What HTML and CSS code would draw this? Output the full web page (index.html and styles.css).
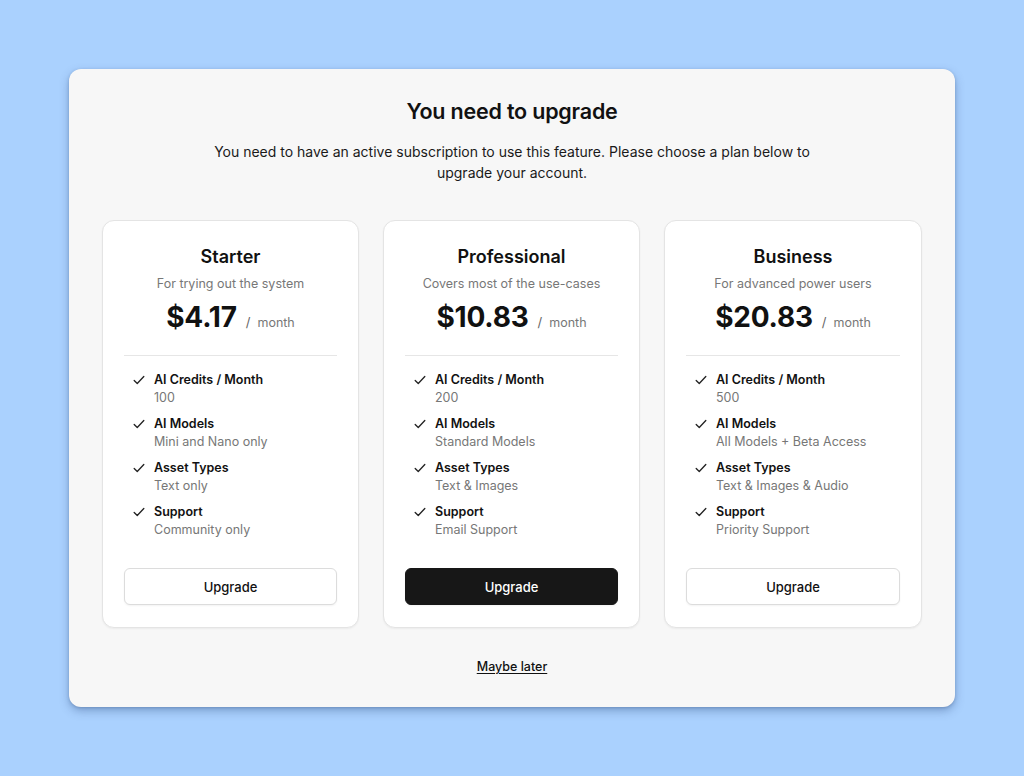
FILE: index.html
```html
<!DOCTYPE html>
<html>
<head>
<meta charset="utf-8">
<link rel="stylesheet" href="styles.css">
</head>
<body>
<div class="page">
  <div class="modal">
    <h1 class="title">You need to upgrade</h1>
    <p class="subtitle">You need to have an active subscription to use this feature. Please choose a plan below to upgrade your account.</p>
    <div class="plans">
      <div class="card">
        <div class="plan-name">Starter</div>
        <div class="plan-desc">For trying out the system</div>
        <div class="price"><span class="amount">$4.17</span><span class="slash">/</span><span class="per">month</span></div>
        <div class="divider"></div>
        <ul class="features">
          <li><svg class="check" viewBox="0 0 16 16"><path d="M2.5 8.5l3.5 3.5 7.5-8"/></svg><div><div class="f-label">AI Credits / Month</div><div class="f-value">100</div></div></li>
          <li><svg class="check" viewBox="0 0 16 16"><path d="M2.5 8.5l3.5 3.5 7.5-8"/></svg><div><div class="f-label">AI Models</div><div class="f-value">Mini and Nano only</div></div></li>
          <li><svg class="check" viewBox="0 0 16 16"><path d="M2.5 8.5l3.5 3.5 7.5-8"/></svg><div><div class="f-label">Asset Types</div><div class="f-value">Text only</div></div></li>
          <li><svg class="check" viewBox="0 0 16 16"><path d="M2.5 8.5l3.5 3.5 7.5-8"/></svg><div><div class="f-label">Support</div><div class="f-value">Community only</div></div></li>
        </ul>
        <button class="btn">Upgrade</button>
      </div>
      <div class="card">
        <div class="plan-name">Professional</div>
        <div class="plan-desc">Covers most of the use-cases</div>
        <div class="price"><span class="amount">$10.83</span><span class="slash">/</span><span class="per">month</span></div>
        <div class="divider"></div>
        <ul class="features">
          <li><svg class="check" viewBox="0 0 16 16"><path d="M2.5 8.5l3.5 3.5 7.5-8"/></svg><div><div class="f-label">AI Credits / Month</div><div class="f-value">200</div></div></li>
          <li><svg class="check" viewBox="0 0 16 16"><path d="M2.5 8.5l3.5 3.5 7.5-8"/></svg><div><div class="f-label">AI Models</div><div class="f-value">Standard Models</div></div></li>
          <li><svg class="check" viewBox="0 0 16 16"><path d="M2.5 8.5l3.5 3.5 7.5-8"/></svg><div><div class="f-label">Asset Types</div><div class="f-value">Text &amp; Images</div></div></li>
          <li><svg class="check" viewBox="0 0 16 16"><path d="M2.5 8.5l3.5 3.5 7.5-8"/></svg><div><div class="f-label">Support</div><div class="f-value">Email Support</div></div></li>
        </ul>
        <button class="btn btn-primary">Upgrade</button>
      </div>
      <div class="card">
        <div class="plan-name">Business</div>
        <div class="plan-desc">For advanced power users</div>
        <div class="price"><span class="amount">$20.83</span><span class="slash">/</span><span class="per">month</span></div>
        <div class="divider"></div>
        <ul class="features">
          <li><svg class="check" viewBox="0 0 16 16"><path d="M2.5 8.5l3.5 3.5 7.5-8"/></svg><div><div class="f-label">AI Credits / Month</div><div class="f-value">500</div></div></li>
          <li><svg class="check" viewBox="0 0 16 16"><path d="M2.5 8.5l3.5 3.5 7.5-8"/></svg><div><div class="f-label">AI Models</div><div class="f-value">All Models + Beta Access</div></div></li>
          <li><svg class="check" viewBox="0 0 16 16"><path d="M2.5 8.5l3.5 3.5 7.5-8"/></svg><div><div class="f-label">Asset Types</div><div class="f-value">Text &amp; Images &amp; Audio</div></div></li>
          <li><svg class="check" viewBox="0 0 16 16"><path d="M2.5 8.5l3.5 3.5 7.5-8"/></svg><div><div class="f-label">Support</div><div class="f-value">Priority Support</div></div></li>
        </ul>
        <button class="btn">Upgrade</button>
      </div>
    </div>
    <div class="later-row"><a class="later" href="#">Maybe later</a></div>
  </div>
</div>
</body>
</html>
```
FILE: styles.css
```css
* { box-sizing: border-box; }
html, body { margin: 0; padding: 0; }
body {
  background: #aad1fe;
  font-family: Inter, "Noto Sans", sans-serif;
  color: #111;
  width: 1024px;
  height: 776px;
}
.page {
  padding-top: 69px;
  padding-left: 69px;
}
.modal {
  width: 886px;
  height: 638px;
  background: #f7f7f7;
  border-radius: 12px;
  box-shadow: 0 4px 10px rgba(40, 70, 120, 0.35), 0 1px 3px rgba(40, 70, 120, 0.25);
  padding: 28px 33px 32px;
}
.title {
  margin: 0;
  font-size: 21.5px;
  line-height: 28px;
  font-weight: 600;
  text-align: center;
  letter-spacing: -0.2px;
}
.subtitle {
  margin: 16px auto 0;
  width: 610px;
  font-size: 14px;
  line-height: 21px;
  text-align: center;
  color: #1a1a1a;
}
.plans {
  margin-top: 37px;
  display: grid;
  grid-template-columns: 257px 257px 258px;
  column-gap: 24px;
}
.card {
  background: #fff;
  border: 1px solid #e4e4e4;
  border-radius: 12px;
  box-shadow: 0 1px 2px rgba(0,0,0,0.05);
  padding: 24px 21px 22px;
  height: 408px;
  display: flex;
  flex-direction: column;
}
.plan-name {
  text-align: center;
  font-size: 18px;
  line-height: 24px;
  font-weight: 600;
}
.plan-desc {
  margin-top: 6px;
  text-align: center;
  font-size: 12.5px;
  line-height: 18px;
  color: #777;
}
.price {
  margin-top: 7px;
  display: flex;
  justify-content: center;
  align-items: baseline;
  line-height: 34px;
}
.amount {
  font-size: 28px;
  font-weight: 700;
  letter-spacing: -0.2px;
}
.slash {
  margin-left: 9px;
  font-size: 13px;
  color: #666;
}
.per {
  margin-left: 7px;
  font-size: 12.5px;
  color: #777;
}
.divider {
  margin-top: 15px;
  height: 1px;
  background: #e6e6e6;
}
.features {
  list-style: none;
  margin: 15px 0 0;
  padding: 0 0 0 8px;
  display: flex;
  flex-direction: column;
  gap: 8px;
}
.features li {
  display: flex;
  align-items: flex-start;
  gap: 8px;
}
.check {
  width: 14px;
  height: 14px;
  margin-top: 2px;
  flex: none;
  fill: none;
  stroke: #222;
  stroke-width: 1.5;
  stroke-linecap: round;
  stroke-linejoin: round;
}
.f-label {
  font-size: 12.5px;
  line-height: 18px;
  font-weight: 600;
}
.f-value {
  font-size: 12.5px;
  line-height: 18px;
  color: #777;
}
.btn {
  margin-top: auto;
  height: 37px;
  width: 100%;
  border: 1px solid #dcdcdc;
  background: #fff;
  border-radius: 6px;
  font-family: Inter, "Noto Sans", sans-serif;
  font-size: 13px;
  font-weight: 500;
  color: #111;
  box-shadow: 0 1px 2px rgba(0,0,0,0.05);
}
.btn-primary {
  background: #171717;
  border-color: #171717;
  color: #fff;
}
.later-row {
  margin-top: 28px;
  text-align: center;
  line-height: 18px;
}
.later {
  font-size: 12.5px;
  font-weight: 500;
  color: #111;
  text-decoration: underline;
  text-underline-offset: 2px;
}
```
